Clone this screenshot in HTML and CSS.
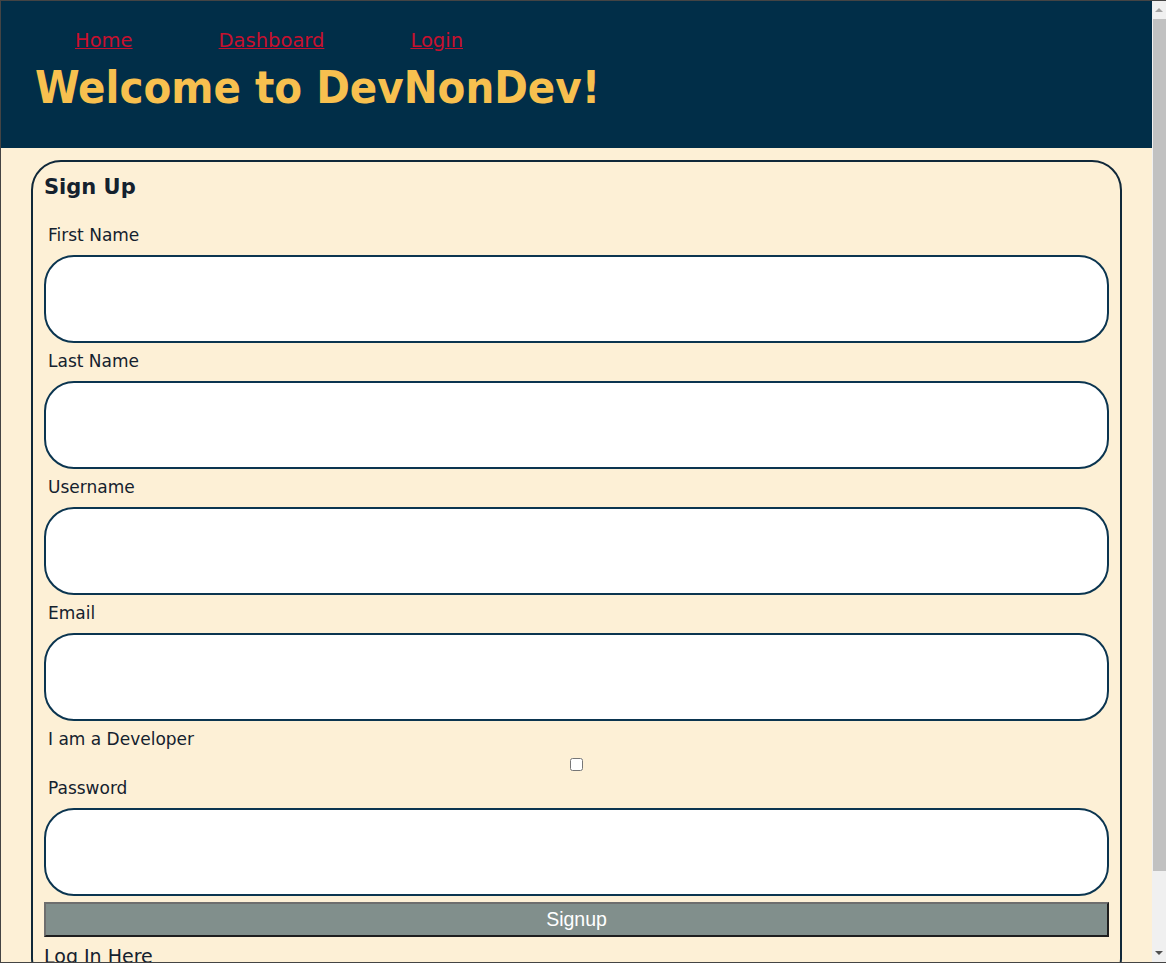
FILE: index.html
```html
<!DOCTYPE html>
<html lang="en">
<head>
<meta charset="utf-8">
<title>DevNonDev - Sign Up</title>
<link rel="stylesheet" href="styles.css">
</head>
<body>
<div class="frame"></div>
<div class="scrollbar" aria-hidden="true">
  <span class="arrow up"></span>
  <span class="thumb"></span>
  <span class="arrow down"></span>
</div>
<header class="site-header">
  <nav class="nav">
    <a href="#" class="nav-link">Home</a>
    <a href="#" class="nav-link">Dashboard</a>
    <a href="#" class="nav-link">Login</a>
  </nav>
  <h1 class="title">Welcome to DevNonDev!</h1>
</header>
<main class="main">
  <form class="card">
    <h2 class="card-title">Sign Up</h2>
    <label class="field-label first" for="first">First Name</label>
    <input class="field" id="first" type="text">
    <label class="field-label" for="last">Last Name</label>
    <input class="field" id="last" type="text">
    <label class="field-label" for="user">Username</label>
    <input class="field" id="user" type="text">
    <label class="field-label" for="email">Email</label>
    <input class="field" id="email" type="email">
    <label class="field-label" for="dev">I am a Developer</label>
    <div class="check-row"><input class="check" id="dev" type="checkbox"></div>
    <label class="field-label tight" for="pw">Password</label>
    <input class="field" id="pw" type="password">
    <button class="submit" type="button">Signup</button>
    <p class="login-link">Log In Here</p>
  </form>
</main>
</body>
</html>
```
FILE: styles.css
```css
body {
  margin: 0;
  background: #fdf0d6;
  font-family: "DejaVu Sans", Verdana, sans-serif;
  color: #14212e;
}
.frame {
  position: fixed;
  inset: 0;
  border-top: 1px solid #444;
  border-left: 1px solid #444;
  border-bottom: 1px solid #444;
  pointer-events: none;
  z-index: 10;
}
.scrollbar {
  position: fixed;
  top: 1px;
  bottom: 1px;
  right: 0;
  width: 14px;
  background: #f0f0f0;
  display: flex;
  flex-direction: column;
  align-items: flex-end;
  z-index: 11;
}
.arrow {
  width: 14px;
  height: 18px;
  display: flex;
  align-items: center;
  justify-content: center;
}
.arrow::before {
  content: "";
  width: 0;
  height: 0;
  border-left: 4px solid transparent;
  border-right: 4px solid transparent;
}
.arrow.up::before {
  border-bottom: 4px solid #a3a3a3;
}
.arrow.down {
  margin-top: auto;
}
.arrow.down::before {
  border-top: 4px solid #505050;
}
.thumb {
  width: 13px;
  height: 852px;
  background: #c1c1c1;
}
.site-header {
  background: #012e48;
  height: 148px;
  box-sizing: border-box;
  padding-top: 29px;
}
.nav {
  display: flex;
  gap: 86px;
  padding-left: 75px;
}
.nav-link {
  color: #c8102e;
  font-size: 19.5px;
  line-height: 24px;
  text-decoration: underline;
}
.title {
  margin: 9px 0 0;
  padding-left: 35px;
  color: #f7c04f;
  font-family: "DejaVu Sans Condensed", "DejaVu Sans", sans-serif;
  font-stretch: condensed;
  font-size: 45px;
  line-height: 52px;
  font-weight: bold;
}
.main {
  padding: 12px 44px 20px 31px;
}
.card {
  border: 2px solid #10283a;
  border-radius: 30px;
  padding: 13px 11px 20px 11px;
  display: flex;
  flex-direction: column;
}
.card-title {
  margin: 0;
  font-size: 21px;
  line-height: 24px;
  font-weight: bold;
  color: #14212e;
}
.field-label {
  display: block;
  margin-top: 8px;
  padding-left: 4px;
  font-size: 17px;
  line-height: 20px;
}
.field-label.first {
  margin-top: 26px;
}
.field-label.tight {
  margin-top: 7px;
}
.field {
  margin: 10px 0 0;
  height: 88px;
  box-sizing: border-box;
  border: 2px solid #0b3550;
  border-radius: 30px;
  background: #fff;
  padding: 0 20px;
  font-size: 16px;
}
.check-row {
  display: flex;
  justify-content: center;
  padding-top: 9px;
}
.check {
  margin: 0;
  width: 13px;
  height: 13px;
}
.submit {
  margin-top: 6px;
  height: 35px;
  background: #818f8c;
  color: #fff;
  font-family: "Liberation Sans", Arial, sans-serif;
  font-size: 19.5px;
  border-style: solid;
  border-width: 2px;
  border-color: #6e6e6e #1e1e1e #1e1e1e #6e6e6e;
}
.login-link {
  margin: 8px 0 0;
  font-size: 19px;
  line-height: 22px;
}
```
